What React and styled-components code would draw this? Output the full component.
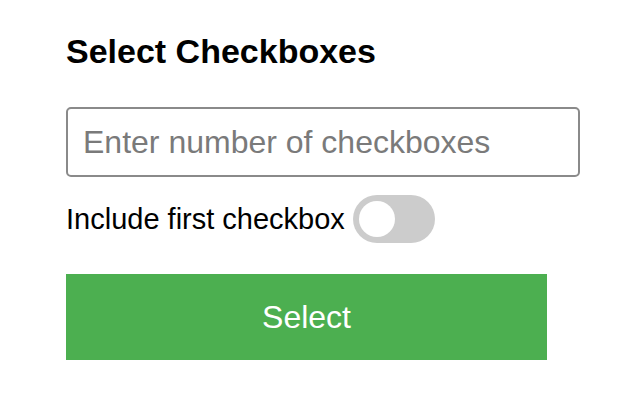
import React, { useState } from "react";
import styled, { createGlobalStyle } from "styled-components";

const GlobalStyle = createGlobalStyle`
    html, body {
        margin: 0;
        padding: 0;
        background: #ffffff;
    }
    body {
        font-family: "Liberation Sans", Arial, sans-serif;
        color: #000;
    }
`;

const Wrapper = styled.div`
    display: flex;
    flex-direction: column;
    align-items: flex-start;
    padding: 31px 0 0 66px;
`;

const Title = styled.h3`
    margin: 0;
    font-size: 34px;
    line-height: 40px;
    font-weight: 700;
`;

const NumberInput = styled.input`
    box-sizing: border-box;
    width: 514px;
    height: 70px;
    margin-top: 36px;
    padding: 0 15px;
    border: 2px solid #8a8a8a;
    border-radius: 5px;
    font-family: inherit;
    font-size: 32px;
    color: #000;
    outline: none;

    &::placeholder {
        color: #7a7a7a;
    }
`;

const Row = styled.label`
    display: flex;
    align-items: center;
    margin-top: 18px;
    font-size: 29px;
    cursor: pointer;
`;

const Switch = styled.span`
    position: relative;
    display: inline-block;
    width: 82px;
    height: 48px;
    margin-left: 8px;
    border-radius: 24px;
    background: ${(p) => (p.$on ? "#4CAF50" : "#cccccc")};
    transition: background 0.2s;

    &::before {
        content: "";
        position: absolute;
        top: 6px;
        left: ${(p) => (p.$on ? "40px" : "6px")};
        width: 36px;
        height: 36px;
        border-radius: 50%;
        background: #ffffff;
        transition: left 0.2s;
    }
`;

const HiddenBox = styled.input`
    display: none;
`;

const SelectButton = styled.button`
    width: 481px;
    height: 86px;
    margin-top: 31px;
    border: none;
    background: #4caf50;
    color: #ffffff;
    font-family: inherit;
    font-size: 32px;
    cursor: pointer;
`;

const App = () => {
    const [count, setCount] = useState("");
    const [first, setFirst] = useState(false);

    return (
        <Wrapper>
            <GlobalStyle />
            <Title>Select Checkboxes</Title>
            <NumberInput
                type="number"
                placeholder="Enter number of checkboxes"
                value={count}
                onChange={(e) => setCount(e.target.value)}
            />
            <Row>
                Include first checkbox
                <HiddenBox
                    type="checkbox"
                    checked={first}
                    onChange={() => setFirst(!first)}
                />
                <Switch $on={first} />
            </Row>
            <SelectButton>Select</SelectButton>
        </Wrapper>
    );
};

export default App;
